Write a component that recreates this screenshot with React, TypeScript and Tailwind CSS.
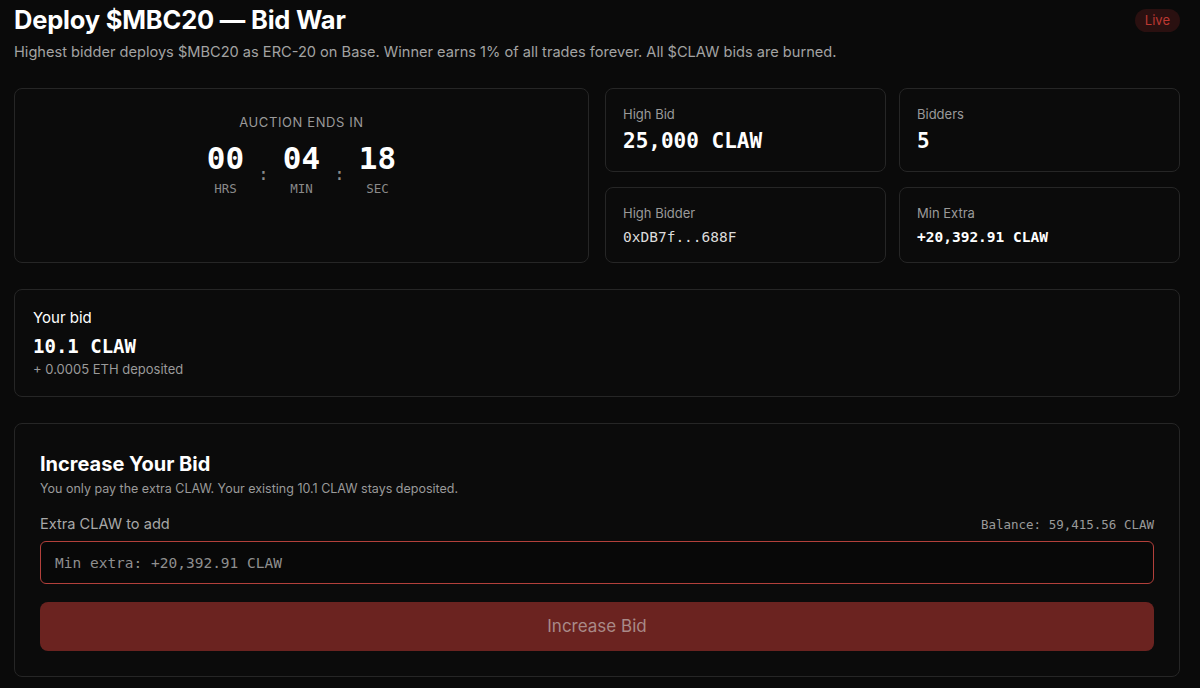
import React from "react";

const mono = "font-['DejaVu_Sans_Mono','Liberation_Mono',monospace]";

function Stat({ label, value, valueClass }: { label: string; value: string; valueClass: string }) {
  return (
    <div className="rounded-lg border border-[#262626] bg-[#0b0b0b] px-[17px] pt-[16px]">
      <div className="text-[13px] leading-[18px] text-[#9a9a9a]">{label}</div>
      <div className={`${mono} ${valueClass}`}>{value}</div>
    </div>
  );
}

function Unit({ value, label }: { value: string; label: string }) {
  return (
    <div className="flex flex-col items-center w-[56px]">
      <div className={`${mono} text-[31px] leading-[36px] font-bold text-white`}>{value}</div>
      <div className={`${mono} text-[12.5px] leading-[16px] text-[#8a8a8a] mt-[5px]`}>{label}</div>
    </div>
  );
}

function Colon() {
  return <div className={`${mono} text-[18px] text-[#8a8a8a] mt-[10px] w-[20px] text-center`}>:</div>;
}

export default function App() {
  return (
    <div className="min-h-[688px] bg-[#0a0a0a] font-['Inter',sans-serif] text-white pl-[14px] pr-[20px] pt-[4px] pb-[12px]">
      <div className="flex items-start justify-between">
        <div>
          <h1 className="text-[25.5px] leading-[32px] font-bold tracking-[-0.2px]">Deploy $MBC20 — Bid War</h1>
          <p className="text-[14.6px] leading-[22px] text-[#a3a3a3] mt-[5px]">
            Highest bidder deploys $MBC20 as ERC-20 on Base. Winner earns 1% of all trades forever. All $CLAW bids are burned.
          </p>
        </div>
        <span className="mt-[5px] rounded-full bg-[#2a1010] px-[10px] py-[2px] text-[13px] leading-[19px] text-[#bd3832]">
          Live
        </span>
      </div>

      <div className="grid grid-cols-2 gap-[16px] mt-[25px]">
        <div className="rounded-lg border border-[#262626] bg-[#0b0b0b] pt-[25px] h-[175px]">
          <div className="text-center text-[13px] leading-[16px] tracking-[0.6px] text-[#9a9a9a]">AUCTION ENDS IN</div>
          <div className="flex justify-center items-center mt-[10px]">
            <Unit value="00" label="HRS" />
            <Colon />
            <Unit value="04" label="MIN" />
            <Colon />
            <Unit value="18" label="SEC" />
          </div>
        </div>
        <div className="grid grid-cols-2 gap-x-[13px] gap-y-[14px]">
          <div className="h-[84px] grid">
            <Stat label="High Bid" value="25,000 CLAW" valueClass="text-[21px] leading-[30px] font-bold text-white mt-[3px]" />
          </div>
          <div className="h-[84px] grid">
            <Stat label="Bidders" value="5" valueClass="text-[21px] leading-[30px] font-bold text-white mt-[3px]" />
          </div>
          <div className="h-[76px] grid">
            <Stat label="High Bidder" value="0xDB7f...688F" valueClass="text-[14.5px] leading-[22px] text-[#dcdcdc] mt-[4px]" />
          </div>
          <div className="h-[76px] grid">
            <Stat label="Min Extra" value="+20,392.91 CLAW" valueClass="text-[14.5px] leading-[22px] font-bold text-white mt-[4px]" />
          </div>
        </div>
      </div>

      <div className="rounded-lg border border-[#262626] bg-[#0b0b0b] mt-[26px] h-[108px] px-[18px] pt-[18px]">
        <div className="text-[15px] leading-[20px] font-normal text-white">Your bid</div>
        <div className={`${mono} text-[19px] leading-[28px] font-bold text-white mt-[4px]`}>10.1 CLAW</div>
        <div className="text-[13px] leading-[18px] text-[#9a9a9a]">+ 0.0005 ETH deposited</div>
      </div>

      <div className="rounded-lg border border-[#262626] bg-[#0b0b0b] mt-[26px] px-[25px] pt-[27px] pb-[25px]">
        <h2 className="text-[20px] leading-[26px] font-bold text-white">Increase Your Bid</h2>
        <p className="text-[12.5px] leading-[18px] text-[#9a9a9a] mt-[3px]">
          You only pay the extra CLAW. Your existing 10.1 CLAW stays deposited.
        </p>
        <div className="flex items-end justify-between mt-[16px]">
          <span className="text-[14.6px] leading-[20px] text-[#a8a8a8]">Extra CLAW to add</span>
          <span className={`${mono} text-[12.5px] leading-[18px] text-[#9a9a9a]`}>Balance: 59,415.56 CLAW</span>
        </div>
        <input
          className={`${mono} mt-[7px] block w-full h-[43px] rounded-md border border-[#b3403b] bg-[#080808] px-[14px] text-[14.5px] text-white placeholder:text-[#8f8f8f] outline-none`}
          placeholder="Min extra: +20,392.91 CLAW"
        />
        <button className="mt-[18px] w-full h-[49px] rounded-lg bg-[#6b2320] text-[17px] text-[#a98a88]">
          Increase Bid
        </button>
      </div>
    </div>
  );
}
